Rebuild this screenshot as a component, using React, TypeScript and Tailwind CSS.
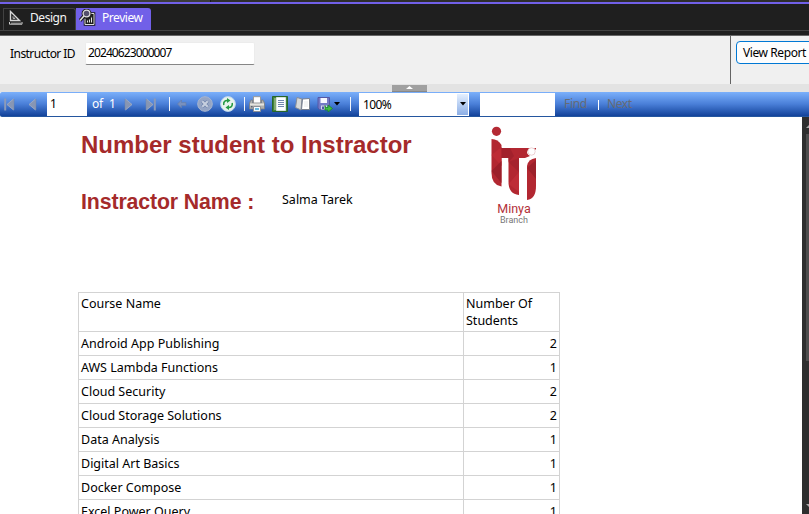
import React from "react";

const rows: [string, number][] = [
  ["Android App Publishing", 2],
  ["AWS Lambda Functions", 1],
  ["Cloud Security", 2],
  ["Cloud Storage Solutions", 2],
  ["Data Analysis", 1],
  ["Digital Art Basics", 1],
  ["Docker Compose", 1],
  ["Excel Power Query", 1],
];

function DesignIcon() {
  return (
    <svg width="14" height="15" viewBox="0 0 14 15" className="shrink-0">
      <path d="M1.5 1.5V10.5H10.5Z" fill="none" stroke="#d8d8d8" strokeWidth="1.4" />
      <path d="M4 6.5V8.5H6Z" fill="#1f1f1f" stroke="#d8d8d8" strokeWidth=".7" />
      <path d="M.5 12V14.2H13V12M3 12.5V14M5 12.5V14M7 12.5V14M9 12.5V14M11 12.5V14" fill="none" stroke="#cfcfcf" />
    </svg>
  );
}

function PreviewIcon() {
  return (
    <svg width="17" height="17" viewBox="0 0 17 17" className="shrink-0">
      <path d="M6 8V15.5H15V4.5H10V8Z" fill="#252525" stroke="#181818" strokeWidth="2.6" />
      <path d="M6 9.500V15.500H15V4.500H12" fill="none" stroke="#dedede" />
      <path d="M8.500 13.500V11.500M10.500 13.500V10.500M12.500 13.500V8.500" stroke="#e8e8e8" />
      <path d="M1 11.500L5 7" stroke="#181818" strokeWidth="3.6" />
      <circle cx="7.5" cy="4.500" r="3.4" fill="#6657c5" stroke="#181818" strokeWidth="3" />
      <path d="M1 11.500L5 7" stroke="#dedede" strokeWidth="1.6" />
      <circle cx="7.5" cy="4.500" r="3.4" fill="#54506b" stroke="#dedede" strokeWidth="1.3" />
    </svg>
  );
}

function NavIcon({ flip, bar }: { flip?: boolean; bar?: boolean }) {
  return (
    <svg width="11" height="13" viewBox="0 0 11 13" className={flip ? "shrink-0 -scale-x-100" : "shrink-0"}>
      {bar && <path d="M1.2 .5V12.5" stroke="#8b9ab8" strokeWidth="2" />}
      <path d="M9.5 1V12L3 6.5Z" fill="#8796b4" stroke="#a3afc4" strokeWidth=".8" />
      <path d="M9.8 1V12" stroke="#75849f" strokeWidth=".8" />
    </svg>
  );
}

function BackIcon() {
  return (
    <svg width="10" height="10" viewBox="0 0 10 10" className="shrink-0">
      <path d="M.5 5L4.5 1V3.5H9V6.5H4.5V9Z" fill="#7990bd" stroke="#667fae" strokeWidth=".7" />
    </svg>
  );
}

function StopIcon() {
  return (
    <svg width="16" height="16" viewBox="0 0 16 16" className="shrink-0">
      <circle cx="8" cy="8" r="7.3" fill="#95a5c4" stroke="#a7b5cf" />
      <path d="M5.3 5.3L10.7 10.7M10.7 5.3L5.3 10.7" stroke="#7084ab" strokeWidth="3.4" />
      <path d="M5.3 5.3L10.7 10.7M10.7 5.3L5.3 10.7" stroke="#c7d0df" strokeWidth="2" />
    </svg>
  );
}

function RefreshIcon() {
  return (
    <svg width="16" height="16" viewBox="0 0 16 16" className="shrink-0">
      <circle cx="8" cy="8" r="7.4" fill="#e9f3ed" stroke="#bcd6ee" />
      <path d="M3.8 9C3.2 6 5 4.3 7.500 4.500" fill="none" stroke="#269a43" strokeWidth="1.6" />
      <path d="M7 2L10.500 4.500L7 7Z" fill="#269a43" />
      <path d="M12.2 7C12.8 10 11 11.700 8.500 11.500" fill="none" stroke="#269a43" strokeWidth="1.6" />
      <path d="M9 9L5.500 11.5L9 14Z" fill="#269a43" />
    </svg>
  );
}

function PrintIcon() {
  return (
    <svg width="16" height="16" viewBox="0 0 16 16" className="shrink-0">
      <path d="M4.5 7V.7H11.5V7" fill="#fff" stroke="#9c9a98" />
      <path d="M2 4H3.5V7H12.5V4H14L15.5 7V13H.5V7Z" fill="#b0b0ad" stroke="#7b7f84" strokeWidth=".8" />
      <path d="M1 7.500H15V9.500H1Z" fill="#e5e4df" />
      <path d="M4.5 10.5H11.5V15.5H4.5Z" fill="#f6fbff" stroke="#8d9095" />
      <path d="M6 12H10V14H6Z" fill="#69b9df" />
      <path d="M2 10.8H3.6" stroke="#36455b" />
    </svg>
  );
}

function LayoutIcon() {
  return (
    <svg width="16" height="16" viewBox="0 0 16 16" className="shrink-0">
      <path d="M.5 .5H15.5V15.5H.5Z" fill="#3f843c" stroke="#296529" />
      <path d="M2 2H14V14H2Z" fill="#81aa72" />
      <path d="M4.5 1.5H13.5V14.5H4.5Z" fill="#fcffff" stroke="#d7e4dc" />
      <path d="M6 4.5H12M6 6.5H12M6 8.5H12M6 10.5H12" stroke="#7189ad" />
    </svg>
  );
}

function PagesIcon() {
  return (
    <svg width="16" height="14" viewBox="0 0 16 14" className="shrink-0">
      <path d="M2 .5L7 2L6 13L.5 10.5Z" fill="#d7d9d8" stroke="#888d96" />
      <path d="M7.5 2L14.5 1.5V12.5H6.500Z" fill="#fff" stroke="#777f8e" />
      <path d="M9 5H13M9 7H13M9 9H13" stroke="#e6e8e9" />
    </svg>
  );
}

function SaveIcon() {
  return (
    <svg width="17" height="16" viewBox="0 0 17 16" className="shrink-0">
      <path d="M1 1.5H12.5V13.5H2.5L1 12Z" fill="#7479c6" stroke="#5558a6" />
      <path d="M3.5 2H10V7H3.5Z" fill="#f7f8ff" />
      <path d="M4 9.5H10V13.5H4Z" fill="#d6d8eb" />
      <path d="M5 10.5H7V13H5Z" fill="#4f58a7" />
      <path d="M8 9.500L8.500 11.500H11V9L15.500 12.500L11 16V14H8Z" fill="#41bd43" stroke="#16882b" strokeWidth=".8" />
    </svg>
  );
}

function Separator() {
  return <div className="h-[14px] w-px shrink-0 bg-[#f3f6fc]" />;
}

function Logo() {
  return (
    <svg width="52" height="78" viewBox="0 0 52 78" className="shrink-0">
      <circle cx="8.500" cy="7.300" r="4.600" fill="#b42a34" />
      <path d="M3.500 15Q10 15 13.500 21V62.500Q3.500 61 3.500 49Z" fill="#b22731" />
      <path d="M13 24H43Q39 25.500 39 29Q40 31 42 32L37 34H31V71Q20.500 70 20.500 58V34H13Z" fill="#b22731" />
      <path d="M43 24H48V26Q47 23.500 43 24Z" fill="#b22731" />
      <path d="M48 34V62Q48 75 39 76V42Q40 35 48 34Z" fill="#b22731" />
      <circle cx="43.500" cy="27.500" r="3.700" fill="#fff" stroke="#d9a4a8" strokeWidth=".5" />
      <path d="M3.500 31L13.500 23V42Z" fill="#be2b35" />
      <path d="M3.500 47L13.500 37V59Z" fill="#9b1f2a" />
      <path d="M13.500 24H22L26 32L20.500 38V34H13.500Z" fill="#a2212c" />
      <path d="M20.500 60L31 48V68Z" fill="#be2d37" />
      <path d="M20.500 38L31 34V48Z" fill="#a6232e" />
      <path d="M39 44L48 36V55Z" fill="#9c202a" />
    </svg>
  );
}

export default function App() {
  return (
    <main className="flex h-[514px] w-[809px] flex-col overflow-hidden bg-white font-['Noto_Sans','Open_Sans',sans-serif] text-[12px] leading-4 text-black">
      <div className="flex h-[2px] shrink-0 bg-[#2d2d2d]">
        <div className="w-[211px] border-r border-[#181818] bg-[#3b3b3b]" />
      </div>
      <nav className="flex h-[34px] shrink-0 flex-col border-t-2 border-b border-t-[#7160e8] border-b-[#666] bg-[#1f1f1f]">
        <div className="flex h-[27px] items-end border-b border-[#424242] pl-[3px]">
          <button className="flex h-[22px] w-[73px] items-center rounded-tr-[3px] border border-b-0 border-[#424242] bg-[#1f1f1f] pb-[4px] pl-[5px] text-[#f5f5f5]">
            <DesignIcon />
            <span className="ml-[7px] tracking-[-0.45px]">Design</span>
          </button>
          <button className="flex h-[22px] w-[75px] items-center rounded-tr-[3px] bg-[#7160e8] pb-[3px] pl-[3px] text-white">
            <PreviewIcon />
            <span className="ml-[6px] tracking-[-0.45px]">Preview</span>
          </button>
        </div>
      </nav>
      <section className="flex h-12 shrink-0 bg-[#f0f0f0]">
        <label className="flex w-[730px] shrink-0 items-start pl-[10px]">
          <span className="mt-[10px] w-[75px] shrink-0 whitespace-nowrap tracking-[-0.55px]">Instructor ID</span>
          <span className="mt-[6px] flex h-[23px] w-[170px] items-center rounded-[2px] border border-b-[#868686] border-x-[#ececec] border-t-[#ececec] bg-white pb-px pl-[2px] tracking-[-0.9px]">20240623000007</span>
        </label>
        <div className="w-[79px] shrink-0 overflow-hidden border-l border-[#646464] pt-[5px] pl-[5px]">
          <button className="flex h-[23px] w-[84px] items-center rounded-[4px] border border-[#0078d4] bg-[#fdfdfd] pl-[6px] whitespace-nowrap tracking-[-0.42px]">View Report</button>
        </div>
      </section>
      <div className="flex h-2 shrink-0 items-end bg-[#e3e3e3] pl-[392px]">
        <div className="flex h-[7px] w-[35px] items-center justify-center border-b border-[#888] bg-[#a0a0a0]">
          <svg width="7" height="4" viewBox="0 0 7 4"><path d="M3.500 0L7 3H0Z" fill="#fff" /></svg>
        </div>
      </div>
      <section className="flex h-[25px] shrink-0 items-center rounded-l-[2px] border-b border-[#24569f] bg-linear-to-b from-[#7bb0fb] via-[#4a7fd8] to-[#12429a] text-white">
        <div className="ml-1"><NavIcon bar /></div>
        <div className="ml-[11px]"><NavIcon /></div>
        <div className="ml-[10px] flex h-[23px] w-10 shrink-0 items-center bg-white pl-[3px] text-black">1</div>
        <span className="ml-[5px] w-[17px] tracking-[-0.3px]">of</span><span className="w-[8px]">1</span>
        <div className="ml-[7px]"><NavIcon flip /></div>
        <div className="ml-[10px]"><NavIcon flip bar /></div>
        <div className="ml-[13px]"><Separator /></div>
        <div className="ml-[7px]"><BackIcon /></div>
        <div className="ml-[10px]"><StopIcon /></div>
        <div className="ml-[7px]"><RefreshIcon /></div>
        <div className="ml-2"><Separator /></div>
        <div className="ml-1"><PrintIcon /></div>
        <div className="ml-[7px]"><LayoutIcon /></div>
        <div className="ml-[7px]"><PagesIcon /></div>
        <div className="ml-[6px]"><SaveIcon /></div>
        <svg className="shrink-0" width="6" height="4" viewBox="0 0 6 4"><path d="M0 0H6L3 3.500Z" fill="#000" /></svg>
        <div className="ml-[10px]"><Separator /></div>
        <div className="ml-2 flex h-[23px] w-[110px] items-center justify-between bg-white pt-px pl-1 text-black">
          <span className="tracking-[-0.6px]">100%</span>
          <span className="mr-px mb-px flex h-[21px] w-[11px] items-center justify-center bg-linear-to-b from-[#e5f0ff] to-[#8caee5]">
            <svg width="6" height="4" viewBox="0 0 6 4"><path d="M0 0H6L3 3.500Z" fill="#000" /></svg>
          </span>
        </div>
        <div className="ml-[11px] h-[23px] w-[75px] bg-white" />
        <span className="ml-[9px] w-[34px] tracking-[-0.3px] text-[#656b75]">Find</span>
        <div className="mt-px h-[10px] w-px bg-white" />
        <span className="ml-2 tracking-[-0.4px] text-[#656b75]">Next</span>
      </section>
      <div className="flex min-h-0 flex-1">
        <article className="w-[802px] shrink-0 overflow-hidden bg-white pl-[78px]">
          <header className="flex h-[175px]">
            <div className="w-[406px] pl-[3px] font-['Liberation_Sans',Arial,sans-serif] text-[#a52a2a]">
              <h1 className="mt-[14px] text-[24px] leading-7 font-bold whitespace-nowrap">Number student to Instractor</h1>
              <div className="mt-[30px] flex items-start">
                <h2 className="mt-px w-[201px] text-[21.300px] leading-6 font-bold tracking-[-0.12px] whitespace-nowrap">Instractor Name :</h2>
                <span className="mt-[3px] font-['Noto_Sans','Open_Sans',sans-serif] text-[12.500px] leading-4 text-black">Salma Tarek</span>
              </div>
            </div>
            <div className="flex w-[60px] flex-col items-center pt-[7px] text-center font-['Roboto',sans-serif]">
              <Logo />
              <span className="text-[12.500px] leading-[13px] text-[#b33139]">Minya</span>
              <span className="text-[9px] leading-[10px] text-[#777]">Branch</span>
            </div>
          </header>
          <table className="w-[482px] table-fixed border-collapse text-[12.500px] leading-[17px]">
            <colgroup><col className="w-[385px]" /><col className="w-[96px]" /></colgroup>
            <thead>
              <tr className="h-[39px] text-left align-top">
                <th className="border border-[#d3d3d3] px-[2px] pt-[2px] font-normal">Course Name</th>
                <th className="border border-[#d3d3d3] px-[2px] pt-[2px] font-normal">Number Of Students</th>
              </tr>
            </thead>
            <tbody>
              {rows.map(([name, count]) => (
                <tr key={name} className="h-6 align-top">
                  <td className="border border-[#d3d3d3] px-[2px] pt-[3px]">{name}</td>
                  <td className="border border-[#d3d3d3] px-[2px] pt-[3px] text-right">{count}</td>
                </tr>
              ))}
            </tbody>
          </table>
        </article>
        <aside className="flex w-[7px] flex-col items-end overflow-hidden bg-[#2e2e2e] pt-[8px]">
          <svg className="shrink-0" width="3" height="3" viewBox="0 0 3 3"><path d="M0 3L3 0V3Z" fill="#aaa" /></svg>
          <div className="mt-[6px] h-[227px] w-[3px] shrink-0 bg-[#4d4d4d]" />
          <svg className="mt-[143px] shrink-0" width="3" height="3" viewBox="0 0 3 3"><path d="M0 0H3V3Z" fill="#aaa" /></svg>
        </aside>
      </div>
    </main>
  );
}
